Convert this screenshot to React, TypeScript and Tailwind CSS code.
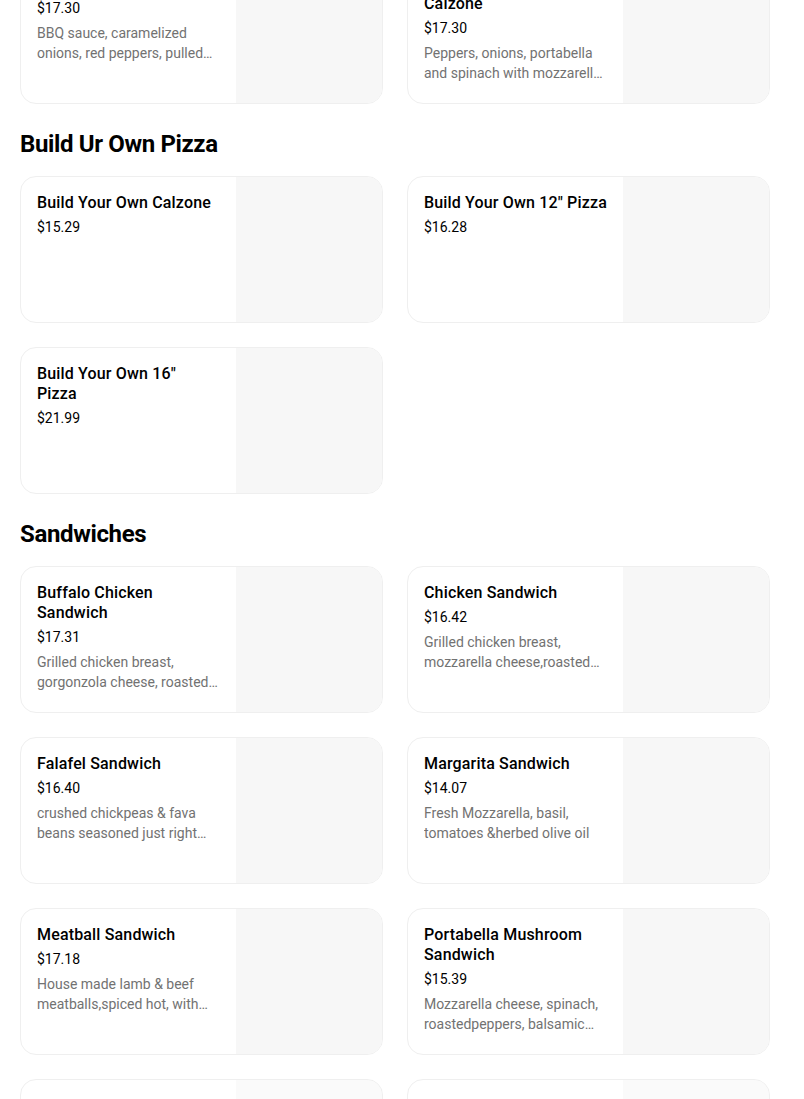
import React from 'react';

type Item = {
  name: string;
  price: string;
  description?: string;
  faded?: boolean;
};

const sections: { title?: string; items: Item[] }[] = [
  {
    items: [
      { name: 'BBQ Chicken Calzone', price: '$17.30', description: 'BBQ sauce, caramelized onions, red peppers, pulled chicken and mozzarella cheese' },
      { name: 'Portabella Vegetable Calzone', price: '$17.30', description: 'Peppers, onions, portabella and spinach with mozzarella cheese' },
    ],
  },
  {
    title: 'Build Ur Own Pizza',
    items: [
      { name: 'Build Your Own Calzone', price: '$15.29' },
      { name: 'Build Your Own 12" Pizza', price: '$16.28' },
      { name: 'Build Your Own 16"\nPizza', price: '$21.99' },
    ],
  },
  {
    title: 'Sandwiches',
    items: [
      { name: 'Buffalo Chicken Sandwich', price: '$17.31', description: 'Grilled chicken breast, gorgonzola cheese, roasted peppers with buffalo sauce' },
      { name: 'Chicken Sandwich', price: '$16.42', description: 'Grilled chicken breast, mozzarella cheese,roasted peppers and pesto' },
      { name: 'Falafel Sandwich', price: '$16.40', description: 'crushed chickpeas & fava beans seasoned just right with tahini sauce' },
      { name: 'Margarita Sandwich', price: '$14.07', description: 'Fresh Mozzarella, basil, tomatoes &herbed olive oil' },
      { name: 'Meatball Sandwich', price: '$17.18', description: 'House made lamb & beef meatballs,spiced hot, with tomato sauce' },
      { name: 'Portabella Mushroom Sandwich', price: '$15.39', description: 'Mozzarella cheese, spinach, roastedpeppers, balsamic glaze' },
      { name: 'Philly Steak Sandwich', price: '$17.99', faded: true },
      { name: 'Italian Sub Sandwich', price: '$16.99', faded: true },
    ],
  },
];

const MenuCard = ({ item }: { item: Item }) => (
  <div className="flex h-[147px] overflow-hidden rounded-2xl border border-[#efefef] bg-white">
    <div className={`flex min-w-0 flex-1 flex-col p-4 ${item.faded ? 'opacity-10' : ''}`}>
      <h3 className="whitespace-pre-line text-[16px] font-medium leading-5 tracking-[0.01em] text-black">{item.name}</h3>
      <p className="mt-1 text-[14px] leading-5 text-black">{item.price}</p>
      {item.description && (
        <p className="mt-[5px] line-clamp-2 text-[14px] leading-5 text-[#727272]">{item.description}</p>
      )}
    </div>
    <div className={`h-full w-[146px] shrink-0 bg-[#f7f7f7] ${item.faded ? 'opacity-60' : ''}`} />
  </div>
);

export default function App() {
  return (
    <div className="min-h-screen bg-white font-['Roboto',sans-serif] antialiased">
      <div className="-mt-[43px] ml-5 w-[750px]">
        {sections.map((section, i) => (
          <section key={i}>
            {section.title && (
              <h2 className="mt-6 mb-4 text-[24px] font-bold leading-8 tracking-[-0.015em] text-black">
                {section.title}
              </h2>
            )}
            <div className="grid grid-cols-2 gap-6">
              {section.items.map((item) => (
                <MenuCard key={item.name} item={item} />
              ))}
            </div>
          </section>
        ))}
      </div>
    </div>
  );
}
